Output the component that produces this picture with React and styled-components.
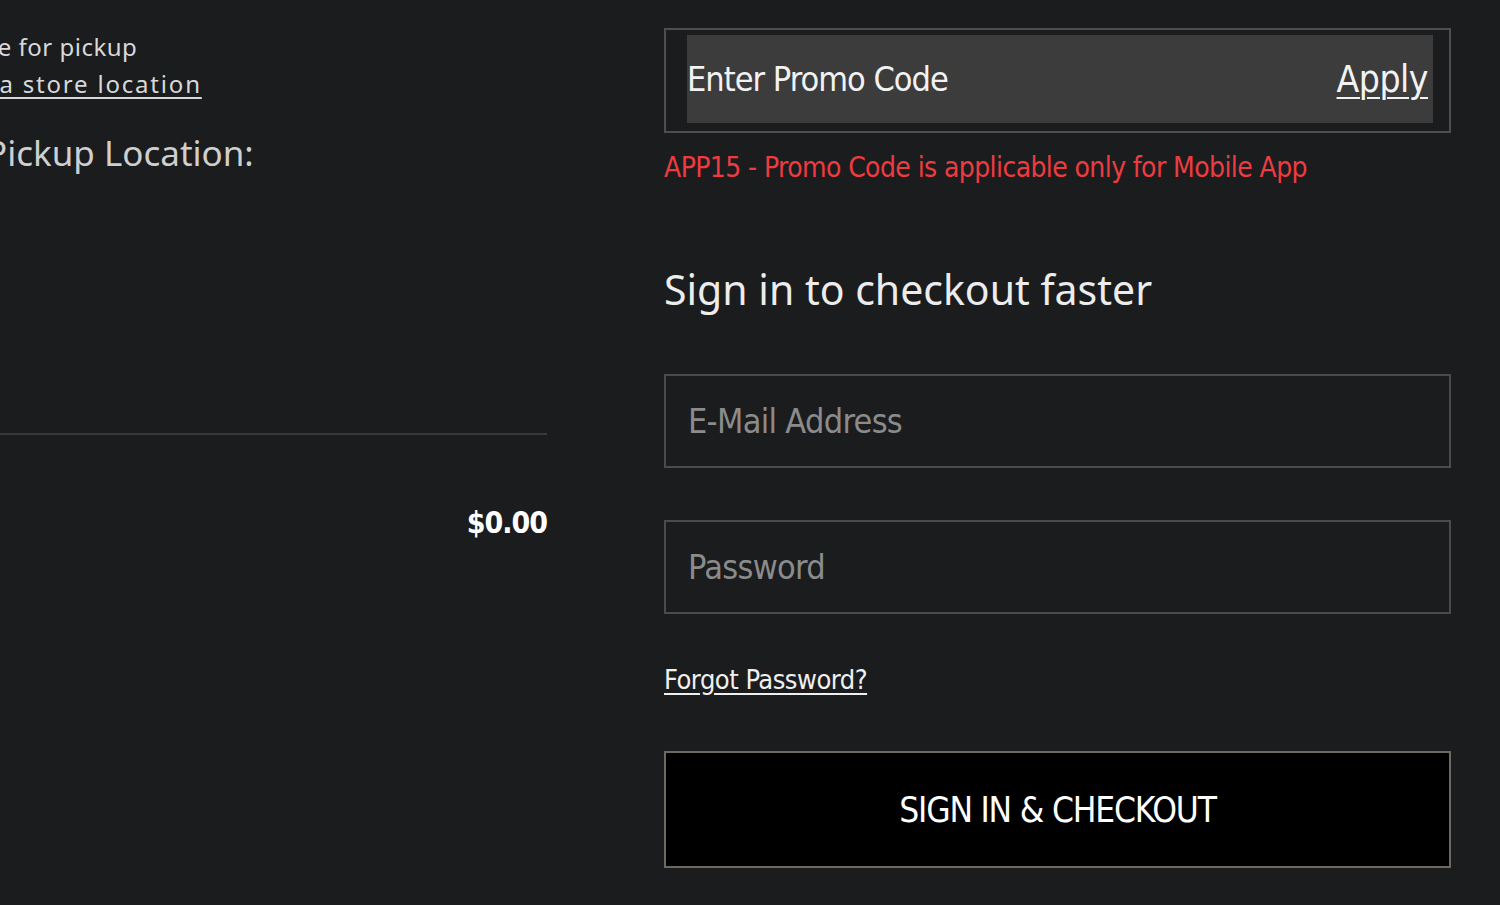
import React from 'react';
import styled, { createGlobalStyle } from 'styled-components';

const GlobalStyle = createGlobalStyle`
    html, body {
        margin: 0;
        padding: 0;
        background: #1b1c1e;
    }
    body {
        font-family: "Liberation Sans Narrow", "DejaVu Sans Condensed", "Liberation Sans", sans-serif;
        color: #e6e6e6;
        overflow: hidden;
    }
`;

function App() {
    return (
        <>
            <GlobalStyle />
            <PageStyled>
                {/* Pickup / summary column, clipped at the left edge */}
                <div className='summary'>
                    <p className='pickup-note'>Store for pickup</p>
                    <a className='pickup-link' href="#">Select a store location</a>
                    <h3>Pickup Location:</h3>
                    <hr />
                    <div className='total'>$0.00</div>
                </div>

                {/* Checkout column */}
                <div className='checkout'>
                    <PromoBox>
                        <div className='promo-inner'>
                            <span className='promo-placeholder'>Enter Promo Code</span>
                            <a href="#">Apply</a>
                        </div>
                    </PromoBox>
                    <PromoError>APP15 - Promo Code is applicable only for Mobile App</PromoError>
                    <Heading>Sign in to checkout faster</Heading>
                    <Field placeholder="E-Mail Address" />
                    <Field placeholder="Password" type="password" $gap={52} />
                    <ForgotLink href="#">Forgot Password?</ForgotLink>
                    <CheckoutButton>SIGN IN &amp; CHECKOUT</CheckoutButton>
                </div>
            </PageStyled>
        </>
    );
}

const PageStyled = styled.div`
    display: grid;
    grid-template-columns: 647px 787px;
    column-gap: 117px;
    margin-left: -100px;
    padding-top: 28px;
    min-height: 905px;
    box-sizing: border-box;

    .summary {
        display: flex;
        flex-direction: column;
        align-items: flex-start;
        font-family: "Noto Sans", "Liberation Sans", sans-serif;

        .pickup-note {
            margin: 0;
            padding-left: 50px;
            font-size: 24px;
            line-height: 37px;
            letter-spacing: 0.5px;
            color: #d9d9d9;
        }

        .pickup-link {
            padding-left: 14px;
            font-size: 24px;
            line-height: 37px;
            letter-spacing: 1.8px;
            color: #d9d9d9;
            text-decoration: underline;
            text-underline-offset: 4px;
        }

        h3 {
            margin: 27px 0 0;
            padding-left: 86px;
            font-weight: 400;
            font-size: 35px;
            line-height: 48px;
            color: #cfcfcf;
        }

        hr {
            align-self: stretch;
            margin: 256px 0 0;
            border: none;
            border-top: 2px solid #38393b;
        }

        .total {
            align-self: flex-end;
            margin-top: 68px;
            font-family: "Liberation Sans Narrow", "DejaVu Sans Condensed", sans-serif;
            font-weight: 700;
            font-size: 30px;
            letter-spacing: -1px;
            line-height: 40px;
            color: #ffffff;
        }
    }

    .checkout {
        display: flex;
        flex-direction: column;
        align-items: stretch;
    }
`;

const PromoBox = styled.div`
    height: 105px;
    box-sizing: border-box;
    border: 2px solid #4d4e50;
    padding: 5px 16px 8px 21px;
    display: flex;

    .promo-inner {
        flex: 1;
        display: flex;
        align-items: center;
        justify-content: space-between;
        background: #3c3c3c;
        padding-right: 5px;
    }

    .promo-placeholder {
        font-size: 34px;
        letter-spacing: -1px;
        color: #f2f2f2;
    }

    a {
        font-size: 37px;
        letter-spacing: -0.5px;
        color: #f2f2f2;
        text-decoration: underline;
        text-underline-offset: 5px;
        text-decoration-thickness: 2px;
    }
`;

const PromoError = styled.p`
    margin: 17px 0 0;
    font-size: 28px;
    letter-spacing: -0.6px;
    line-height: 36px;
    color: #ee3b40;
`;

const Heading = styled.h2`
    margin: 75px 0 0;
    font-family: "Noto Sans", "Liberation Sans", sans-serif;
    font-weight: 400;
    font-size: 41px;
    line-height: 56px;
    color: #ececec;
`;

const Field = styled.input`
    margin-top: ${props => props.$gap || 57}px;
    height: 94px;
    box-sizing: border-box;
    border: 2px solid #4a4b4d;
    background: transparent;
    padding: 0 22px;
    font-family: inherit;
    font-size: 34px;
    letter-spacing: -0.7px;
    color: #e6e6e6;
    outline: none;

    &::placeholder {
        color: #8b8b8b;
    }
`;

const ForgotLink = styled.a`
    align-self: flex-start;
    margin-top: 49px;
    font-size: 27px;
    letter-spacing: -0.5px;
    line-height: 34px;
    color: #f0f0f0;
    text-decoration: underline;
    text-underline-offset: 4px;
`;

const CheckoutButton = styled.button`
    margin-top: 54px;
    height: 117px;
    border: 2px solid #6e6960;
    background: #000000;
    font-family: inherit;
    font-size: 35px;
    letter-spacing: -1.2px;
    color: #ffffff;
    cursor: pointer;
`;

export default App;
